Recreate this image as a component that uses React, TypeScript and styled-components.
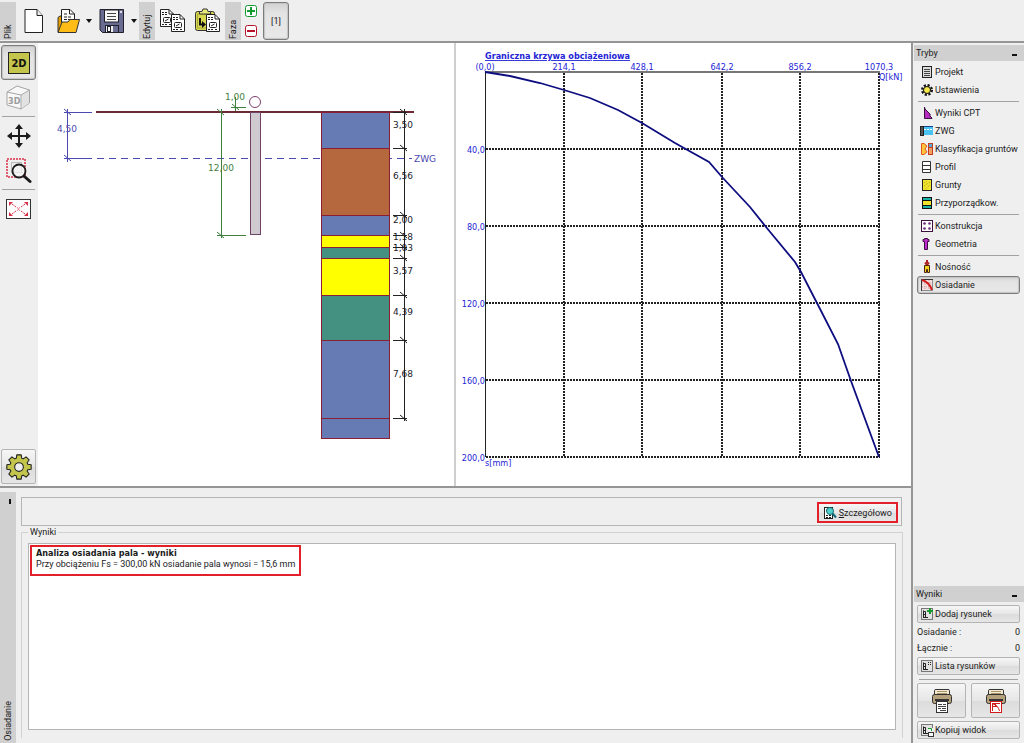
import React from "react";
import styled, { createGlobalStyle, css } from "styled-components";

const GlobalStyle = createGlobalStyle`
  *, *::before, *::after { box-sizing: border-box; }
  body {
    margin: 0;
    background: #efefef;
    color: #1b1b1b;
    font-family: Roboto, "Liberation Sans", sans-serif;
    font-size: 9px;
    line-height: 12px;
  }
  button { font: inherit; color: inherit; padding: 0; margin: 0; cursor: pointer; }
  svg { display: block; flex: none; }
`;

const Shell = styled.div`
  display: flex;
  flex-direction: column;
  min-height: 100vh;
`;

const TopBar = styled.header`
  display: flex;
  align-items: center;
  height: 43px;
  border-bottom: 2px solid #959595;
`;

const BarLabel = styled.span`
  width: 16px;
  height: 38px;
  padding: 1px 0;
  background: #d0d0d0;
  writing-mode: vertical-rl;
  transform: rotate(180deg);
  line-height: 16px;
`;

const ToolGroup = styled.div<{ $pad: string; $gap: number }>`
  display: flex;
  align-items: center;
  gap: ${(p) => p.$gap}px;
  padding: ${(p) => p.$pad};
`;

const IconButton = styled.button`
  display: flex;
  align-items: center;
  justify-content: center;
  border: 0;
  background: none;
`;

const PhaseButtons = styled.div`
  display: flex;
  flex-direction: column;
  gap: 8px;
  padding: 0 6px 0 4px;
`;

const raised = css`
  border: 1px solid #b4b4b4;
  border-radius: 2px;
  background: linear-gradient(#f6f6f6, #e6e6e6 50%, #dcdcdc 52%, #e6e6e6);
`;

const pressed = css`
  border: 1px solid #7c7c7c;
  border-radius: 3px;
  background: linear-gradient(#d3d3d3, #e4e4e4 30%, #e8e8e8);
  box-shadow: inset 0 0 1px 1px #c4c4c4;
`;

const PhaseTab = styled.button`
  ${pressed}
  width: 26px;
  height: 38px;
`;

const Body = styled.div`
  display: flex;
  flex: 1;
`;

const MainColumn = styled.main`
  display: flex;
  flex-direction: column;
  flex: 1;
  min-width: 0;
`;

const WorkArea = styled.div`
  display: flex;
  min-height: 445px;
  border-bottom: 2px solid #959595;
`;

const ViewBar = styled.nav`
  display: flex;
  flex-direction: column;
  align-items: center;
  width: 38px;
  padding: 2px 2px 2px 1px;
`;

const ViewButton = styled.button<{ $look?: "raised" | "pressed"; $h: number }>`
  display: flex;
  align-items: center;
  justify-content: center;
  width: 35px;
  height: ${(p) => p.$h}px;
  border: 0;
  background: none;
  ${(p) => p.$look === "raised" && raised}
  ${(p) => p.$look === "pressed" && pressed}
`;

const Rule = styled.hr<{ $m: string }>`
  align-self: stretch;
  height: 1px;
  margin: ${(p) => p.$m};
  border: 0;
  background: #a2a2a2;
`;

const Spacer = styled.div`
  flex: 1;
`;

const Pane = styled.section<{ $grow: number; $split?: boolean }>`
  flex: ${(p) => p.$grow} 1 0;
  min-width: 0;
  background: #fff;
  ${(p) => p.$split && css`border-left: 2px solid #cfcfcf;`}
  > svg { width: 100%; height: auto; }
`;

const BottomPanel = styled.section`
  display: flex;
  flex: 1;
  min-height: 220px;
  padding-top: 4px;
`;

const SideStrip = styled.div`
  display: flex;
  flex-direction: column;
  align-items: center;
  justify-content: space-between;
  width: 16px;
  padding: 7px 0 2px;
  background: #d0d0d0;
`;

const CollapseMark = styled.button<{ $vertical?: boolean }>`
  width: ${(p) => (p.$vertical ? 2 : 5)}px;
  height: ${(p) => (p.$vertical ? 5 : 2)}px;
  border: 0;
  background: #111;
  ${(p) => (p.$vertical ? css`margin-left: 4px;` : css`margin-bottom: 3px;`)}
`;

const StripText = styled.span`
  writing-mode: vertical-rl;
  transform: rotate(180deg);
  line-height: 16px;
`;

const BottomContent = styled.div`
  display: flex;
  flex-direction: column;
  flex: 1;
  min-width: 0;
  padding: 5px 8px 5px 5px;
`;

const ActionBar = styled.div`
  display: flex;
  align-items: center;
  justify-content: flex-end;
  height: 29px;
  margin-right: 1px;
  padding: 2px 3px 0;
  border: 1px solid #b5b5b5;
`;

const DetailsButton = styled.button`
  display: flex;
  align-items: center;
  gap: 2px;
  height: 21px;
  padding: 0 4px;
  border: 2px solid #e3202a;
  background: linear-gradient(#f6f6f6, #e6e6e6 50%, #dcdcdc 52%, #e6e6e6);
`;

const ResultsGroup = styled.fieldset`
  display: flex;
  flex-direction: column;
  flex: 1;
  min-width: 0;
  margin: 0;
  padding: 5px 6px 8px;
  border: 1px solid #d2d2d2;
  border-bottom: 0;
  > legend { padding: 0 2px; }
`;

const ResultsBox = styled.div`
  flex: 1;
  padding: 1px;
  border: 1px solid #b5b5b5;
  background: #fff;
`;

const ResultNote = styled.div`
  width: max-content;
  max-width: 100%;
  min-height: 31px;
  padding: 1px 4px;
  border: 2px solid #e3202a;
  line-height: 11px;
  > p { margin: 0; }
`;

const NoteTitle = styled.b`
  font-family: "DejaVu Sans Condensed", "DejaVu Sans", sans-serif;
  font-stretch: condensed;
`;

const Sidebar = styled.aside`
  display: flex;
  flex-direction: column;
  width: 113px;
  padding: 2px 0 4px 1px;
  border-left: 2px solid #959595;
`;

const SideHeader = styled.h2`
  display: flex;
  align-items: flex-end;
  justify-content: space-between;
  height: 16px;
  margin: 0;
  padding: 0 7px 2px 2px;
  background: #d0d0d0;
  font-size: 9px;
  font-weight: normal;
`;

const Modes = styled.nav`
  padding-top: 2px;
`;

const ModeList = styled.ul`
  margin: 0;
  padding: 0 4px 0 3px;
  list-style: none;
`;

const ModeButton = styled.button<{ $active?: boolean }>`
  display: flex;
  align-items: center;
  gap: 1px;
  width: 100%;
  height: 18px;
  padding-left: 2px;
  border: 1px solid transparent;
  background: none;
  white-space: nowrap;
  ${(p) => p.$active && pressed}
`;

const Outputs = styled.div`
  display: flex;
  flex-direction: column;
  padding: 3px 4px 0 3px;
`;

const OutputButton = styled.button`
  ${raised}
  display: flex;
  align-items: center;
  gap: 1px;
  height: 18px;
  padding-left: 2px;
  white-space: nowrap;
`;

const Counts = styled.div`
  padding: 1px 0;
`;

const CountRow = styled.div`
  display: flex;
  justify-content: space-between;
  height: 16px;
  padding-top: 2px;
`;

const PrintRow = styled.div`
  display: grid;
  grid-template-columns: 1fr 1fr;
  gap: 5px;
  margin-bottom: 3px;
`;

const PrintButton = styled.button`
  ${raised}
  display: flex;
  align-items: center;
  justify-content: center;
  height: 35px;
`;

const SvgText = styled.text<{ $size?: number; $bold?: boolean; $wide?: boolean }>`
  font-family: ${(p) => (p.$wide ? '"DejaVu Sans"' : '"DejaVu Sans Condensed"')}, sans-serif;
  font-stretch: ${(p) => (p.$wide ? "normal" : "condensed")};
  font-size: ${(p) => p.$size ?? 9}px;
  font-weight: ${(p) => (p.$bold ? "bold" : "normal")};
`;

/* ---------- toolbar icons ---------- */

const NewIcon = () => (
  <svg width="20" height="26" viewBox="0 0 20 26">
    <path d="M1 1.500H13L18.500 7.500V24.500H1Z" fill="#fff" stroke="#222" />
    <path d="M13 1.500V7.500H18.500" fill="#eee" stroke="#222" />
  </svg>
);

const OpenIcon = () => (
  <svg width="24" height="26" viewBox="0 0 24 26">
    <path d="M1 24V9.500L3 8H5V24Z" fill="#e8a000" stroke="#333" />
    <path d="M4.500 14V1.500H13L17.500 6V14" fill="#fff" stroke="#222" />
    <path d="M12.500 1.500V6H17.500" fill="none" stroke="#222" />
    <path d="M7 6h4M7 9h8M7 11.500h8" stroke="#222" strokeDasharray="3 1" />
    <path d="M1 24.500L5 14H11L13 11.500H22.500L19 24.500Z" fill="#ffbb16" stroke="#333" />
  </svg>
);

const Caret = () => (
  <svg width="7" height="4" viewBox="0 0 7 4"><path d="M0 0H6L3 4Z" fill="#111" /></svg>
);

const SaveIcon = () => (
  <svg width="26" height="26" viewBox="0 0 26 26">
    <path d="M1 1.500H24.500V24.500H3.500L1 22Z" fill="#696c90" stroke="#20202c" />
    <rect x="5.500" y="2" width="14" height="12" fill="#f8f8f8" stroke="#20202c" />
    <path d="M8 5.500h9M8 8.500h9M8 11.500h9" stroke="#444" />
    <rect x="6.500" y="17.500" width="13" height="7" fill="#eee" stroke="#20202c" />
    <rect x="8.500" y="18.500" width="3" height="5" fill="#fff" stroke="#20202c" />
    <rect x="14" y="18" width="5" height="6" fill="#696c90" />
    <rect x="21" y="3" width="2" height="2" fill="#ddd" />
  </svg>
);

const Page = ({ x, y }: { x: number; y: number }) => (
  <g transform={`translate(${x} ${y})`}>
    <path d="M.500 .500H9L13.500 5V17.500H.500Z" fill="#fff" stroke="#222" />
    <path d="M9 .500V5H13.500" fill="none" stroke="#222" />
    <path d="M2 3.500h2M5 3.500h2M2 5.500h2M5 5.500h2M2 15.500h2M5 15.500h2M9 15.500h2" stroke="#222" />
    <rect x="3.500" y="8.500" width="7" height="5" rx="1" fill="none" stroke="#222" />
    <path d="M5 12L8.500 10" stroke="#222" />
  </g>
);

const CopyIcon = () => (
  <svg width="27" height="26" viewBox="0 0 27 26"><Page x={0} y={1} /><Page x={11} y={6} /></svg>
);

const PasteIcon = () => (
  <svg width="27" height="26" viewBox="0 0 27 26">
    <rect x="1.500" y="3.500" width="19" height="19" rx="2" fill="#d7d84f" stroke="#333" />
    <rect x="3.500" y="6" width="14" height="14" fill="none" stroke="#aaa93a" />
    <path d="M5.500 6V3.500H8L9 1H13L14 3.500H16.500V6Z" fill="#e9e97c" stroke="#333" />
    <path d="M6 10V16.500H9" fill="none" stroke="#111" strokeWidth="2" />
    <path d="M8 13L12 16.500L8 20Z" fill="#111" />
    <Page x={12} y={6} />
  </svg>
);

const SignIcon = ({ plus }: { plus?: boolean }) => (
  <svg width="12" height="12" viewBox="0 0 12 12">
    <rect x=".500" y=".500" width="11" height="11" rx="2" fill="#fff" stroke={plus ? "#14992c" : "#b5122a"} />
    <path d={plus ? "M2 6H10M6 2V10" : "M2 6H10"} stroke={plus ? "#14992c" : "#b5122a"} strokeWidth="2" />
  </svg>
);

/* ---------- view bar icons ---------- */

const View2D = () => (
  <svg width="22" height="22" viewBox="0 0 22 22">
    <rect x=".500" y=".500" width="21" height="21" fill="#c3c54c" stroke="#222" />
    <SvgText x="11" y="15" textAnchor="middle" $size={11} $bold fill="#111">2D</SvgText>
  </svg>
);

const View3D = () => (
  <svg width="25" height="26" viewBox="0 0 25 26">
    <path d="M1 7L11 1L23.500 5V18L15 24L1 20Z" fill="#f8f8f8" stroke="#a5a5a5" />
    <path d="M15.500 10.500L23 5.500V18L15.500 23.500Z" fill="#e2e2e2" />
    <path d="M1 7L15 10L23.500 5M15 10V24" fill="none" stroke="#a5a5a5" />
    <SvgText x="2" y="19" $size={9} $bold fill="#9c9c9c">3D</SvgText>
  </svg>
);

const MoveIcon = () => (
  <svg width="24" height="24" viewBox="0 0 24 24">
    <path d="M12 3V21M3 12H21" stroke="#1b1b1b" strokeWidth="2" />
    <path d="M12 0L16 5H8ZM12 24L16 19H8ZM0 12L5 8V16ZM24 12L19 8V16Z" fill="#1b1b1b" />
  </svg>
);

const ZoomIcon = () => (
  <svg width="26" height="26" viewBox="0 0 26 26">
    <rect x="1" y="1" width="18" height="18" fill="none" stroke="#d83048" strokeWidth="1.500" strokeDasharray="2 1" />
    <rect x="5.500" y="4.500" width="10" height="10" fill="#eee" stroke="#bbb" />
    <circle cx="13" cy="13" r="6.500" fill="#f4f4f4" fillOpacity=".7" stroke="#1b1b1b" strokeWidth="1.800" />
    <path d="M18.500 18.500L24 23.500" stroke="#1b1b1b" strokeWidth="3" strokeLinecap="round" />
  </svg>
);

const FitIcon = () => (
  <svg width="25" height="20" viewBox="0 0 25 20">
    <rect x=".500" y=".500" width="24" height="19" fill="#fff" stroke="#333" />
    <path d="M6 5L10 8M19 5L15 8M6 15L10 12M19 15L15 12" stroke="#d83048" strokeDasharray="2 1" />
    <path d="M3 3H7L3 7ZM22 3H18L22 7ZM3 17H7L3 13ZM22 17H18L22 13Z" fill="#d83048" />
    <path d="M11 8L14 12M14 8L11 12" stroke="#e88a96" />
  </svg>
);

const Gear = ({ size, fill, hole }: { size: number; fill: string; hole: string }) => {
  const pts: string[] = [];
  for (let i = 0; i < 8; i++) {
    const a = (i * Math.PI) / 4;
    [[-0.3, 8.5], [-0.18, 11.4], [0.18, 11.4], [0.3, 8.5]].forEach(([d, r]) =>
      pts.push(`${(12 + r * Math.sin(a + d)).toFixed(2)},${(12 - r * Math.cos(a + d)).toFixed(2)}`)
    );
  }
  return (
    <svg width={size} height={size} viewBox="0 0 24 24">
      <polygon points={pts.join(" ")} fill={fill} stroke="#222" strokeLinejoin="round" />
      <circle cx="12" cy="12" r="4" fill={hole} stroke="#222" />
    </svg>
  );
};

/* ---------- sidebar icons, all on a 14 x 14 grid ---------- */

const Small = ({ children }: { children: React.ReactNode }) => (
  <svg width="14" height="14" viewBox="0 0 14 14">{children}</svg>
);

const ProjectIcon = () => (
  <Small>
    <rect x="2.500" y="1.500" width="9" height="11" fill="#ddd" stroke="#222" />
    <path d="M4 4.500h6M4 6.500h6M4 8.500h6M4 10.500h6" stroke="#444" />
  </Small>
);
const SettingsIcon = () => (
  <Small>
    <circle cx="7" cy="7" r="4.500" fill="none" stroke="#111" strokeWidth="3" strokeDasharray="2 1.530" />
    <circle cx="7" cy="7" r="3.500" fill="#f6e84a" stroke="#111" />
  </Small>
);
const CptIcon = () => (
  <Small>
    <path d="M4.500 1L5 3L7 5L8 6L10 8V10L12 12V12.500H4.500Z" fill="#b52bbf" stroke="#3b1140" />
  </Small>
);
const WaterIcon = () => (
  <Small>
    <rect x=".500" y="2.500" width="3" height="9" fill="#555" stroke="#222" />
    <rect x="4" y="3" width="9" height="8" fill="#49c3f2" />
    <path d="M4 2.500H13" stroke="#1c3f8c" />
    <path d="M4 5.500H13" stroke="#fff" strokeDasharray="2 1" />
  </Small>
);
const ClassIcon = () => (
  <Small>
    <path d="M1.500 1.500H4L7 4L5 7L7 10L4 12.500H1.500Z" fill="#ffc43b" stroke="#e2561f" />
    <rect x="8.500" y="1.500" width="4" height="4" fill="#58a8d8" stroke="#c43b1f" />
    <rect x="8.500" y="5.500" width="4" height="7" fill="#f0a060" stroke="#c43b1f" />
  </Small>
);
const ProfileIcon = () => (
  <Small><path d="M2.500 1.500H10.500V12.500H2.500ZM2.500 5.500H10.500M2.500 9.500H10.500" fill="#fff" stroke="#333" /></Small>
);
const SoilIcon = () => (
  <Small>
    <rect x="2.500" y="1.500" width="9" height="11" fill="#f2e52e" stroke="#222" />
    <path d="M4 5L7 3M4 8L10 4M5 11L10 7" stroke="#a49a20" strokeDasharray="1 1" />
  </Small>
);
const AssignIcon = () => (
  <Small>
    <rect x="2.500" y="1.500" width="9" height="11" fill="#f2e52e" stroke="#111" />
    <rect x="3" y="2" width="8" height="2" fill="#19b3a6" />
    <rect x="3" y="10" width="8" height="2" fill="#19b3a6" />
    <path d="M2 4.500H12M2 9.500H12" stroke="#111" />
  </Small>
);
const ConstructIcon = () => (
  <Small>
    <rect x="1.500" y="1.500" width="11" height="11" fill="#fff" stroke="#3b1140" />
    <g fill="#6a2a78"><circle cx="4.500" cy="4.500" r="1.300" /><circle cx="9.500" cy="4.500" r="1.300" /><circle cx="4.500" cy="9.500" r="1.300" /><circle cx="9.500" cy="9.500" r="1.300" /></g>
  </Small>
);
const GeometryIcon = () => (
  <Small><path d="M3 2.500H4.500V1.500H7.500V2.500H9V4.500H7.500V12.500H4.500V4.500H3Z" fill="#c22bcf" stroke="#3b1140" /></Small>
);
const CapacityIcon = () => (
  <Small>
    <path d="M7 0V3M5 2.500L7 5L9 2.500" stroke="#b01c1c" strokeWidth="2" fill="none" />
    <path d="M4.500 5.500H9.500V12.500H7.500V9.500H6.500V12.500H4.500Z" fill="#f2d21c" stroke="#4a2410" />
  </Small>
);
const SettlementIcon = () => (
  <Small>
    <rect x="1.500" y="1.500" width="11" height="11" fill="#f6dede" stroke="#8d8d8d" />
    <path d="M5 2V12M9 2V12M2 5H12M2 9H12" stroke="#c3a3a3" strokeDasharray="1 1" />
    <path d="M1.500 13V1.500H13" fill="none" stroke="#333" />
    <path d="M2 2Q9 4 12 12" fill="none" stroke="#d11c1c" strokeWidth="2" />
  </Small>
);

const PictureIcon = ({ kind }: { kind: "add" | "list" | "copy" }) => (
  <Small>
    <rect x="1.500" y="1.500" width="11" height="11" fill="#e2e2e2" stroke="#777" />
    <path d="M3.500 3.500V10.500M3.500 4.500H5.500V10.500M3.500 7.500H6M3 10.500H8" fill="none" stroke="#222" />
    {kind === "add" && <path d="M7 4H13M10 1V7" stroke="#14992c" strokeWidth="2" />}
    {kind === "list" && <path d="M8 3.500h1M10 3.500h1M8 5.500h1M10 5.500h1" stroke="#222" />}
    {kind === "copy" && (
      <>
        <rect x="8" y="5" width="6" height="9" fill="#efefef" />
        <path d="M8 5.500H11.500V8" fill="none" stroke="#14992c" />
        <rect x="8.500" y="9.500" width="5" height="4" fill="#fff" stroke="#333" />
      </>
    )}
  </Small>
);

const PrinterIcon = ({ red }: { red?: boolean }) => (
  <svg width="22" height="26" viewBox="0 0 22 26">
    <path d="M3.500 7V2.500Q3.500 1.500 5 1.500H17Q18.500 1.500 18.500 2.500V7" fill="#f4ead2" stroke="#333" />
    <path d="M6 3.500H16M6 5.500H16" stroke="#a79468" />
    <rect x="1.500" y="6.500" width="19" height="9" rx="2" fill="#b5a27c" stroke="#333" />
    <path d="M4 12H18" stroke="#333" strokeWidth="2" />
    <rect x="5.500" y="13.500" width="11" height="11" fill="#fff" stroke={red ? "#d11c1c" : "#333"} />
    {red ? (
      <path d="M7.500 15V23M7 15.500H15M8 16Q13 17 14.500 23M10.500 16V19M8 18.500H12" fill="none" stroke="#d11c1c" />
    ) : (
      <path d="M7 16.500H11M12 16.500H15M7 18.500H15M7 20.500H10M11 20.500H15M9 22.500H15" stroke="#444" />
    )}
  </svg>
);

const DetailsIcon = () => (
  <svg width="14" height="14" viewBox="0 0 14 14">
    <rect x="1.500" y="1.500" width="8" height="11" fill="#fff" stroke="#222" />
    <path d="M3 9.500h2M6 9.500h2M3 11.500h2M6 11.500h2M3 4h2" stroke="#222" />
    <circle cx="7" cy="5" r="3.500" fill="#4fd0cc" stroke="#156b70" />
    <path d="M9.500 7.500L13 11.500" stroke="#0f6b78" strokeWidth="2" />
  </svg>
);

/* ---------- pile and soil profile ---------- */

const layers = [
  { top: 112, bottom: 148, fill: "#667ab3", label: "3,50", base: 128 },
  { top: 148, bottom: 215, fill: "#b5673d", label: "6,56", base: 179 },
  { top: 215, bottom: 235, fill: "#667ab3", label: "2,00", base: 223 },
  { top: 235, bottom: 247, fill: "#ffff00", label: "1,18", base: 240 },
  { top: 247, bottom: 258, fill: "#459181", label: "1,03", base: 251 },
  { top: 258, bottom: 295, fill: "#ffff00", label: "3,57", base: 274 },
  { top: 295, bottom: 340, fill: "#459181", label: "4,39", base: 315 },
  { top: 340, bottom: 418, fill: "#667ab3", label: "7,68", base: 377 },
];

const Tick = ({ x, y }: { x: number; y: number }) => <path d={`M${x - 4} ${y - 3}L${x + 3} ${y + 3}`} />;

const ProfileDrawing = () => (
  <svg viewBox="38 43 416 443" role="img" aria-label="Profil">
    <path d="M96 112H414" stroke="#6b2a33" strokeWidth="2" />
    <path d="M97 158.500H412" stroke="#4a4ab0" strokeDasharray="7 5" />
    <g stroke="#4a4ab0" fill="none">
      <path d="M67.500 109V162M64 112.500H92M64 158.500H92" />
      <Tick x={68} y={112} /><Tick x={68} y={158} />
    </g>
    <SvgText $wide x="67" y="132" textAnchor="middle" fill="#4a4ab0">4,50</SvgText>
    <SvgText $wide x="414" y="162" fill="#4a4ab0">ZWG</SvgText>
    <g stroke="#3f7f3f" fill="none">
      <path d="M221.500 109V238M217 235.500H246M235.500 97V111M231 107.500H246" />
      <Tick x={221} y={112} /><Tick x={221} y={235} /><Tick x={236} y={107} />
    </g>
    <SvgText $wide x="221" y="171" textAnchor="middle" fill="#3f7f3f">12,00</SvgText>
    <SvgText $wide x="235" y="100" textAnchor="middle" fill="#3f7f3f">1,00</SvgText>
    <circle cx="255" cy="102" r="5.500" fill="#fff" stroke="#7d3f6b" />
    <rect x="250.500" y="112.500" width="10" height="122" fill="#cfcacf" stroke="#6e4366" />
    {layers.map((l) => (
      <rect key={l.label} x="321.500" y={l.top + 0.5} width="68" height={l.bottom - l.top} fill={l.fill} stroke="#8a1f33" />
    ))}
    <rect x="321.500" y="418.500" width="68" height="20" fill="#667ab3" stroke="#8a1f33" />
    <g stroke="#222" fill="none">
      <path d="M404.500 109V421" />
      {[...layers.map((l) => l.top), 418].map((y) => (
        <g key={y}><path d={`M393 ${y + 0.5}H407`} /><Tick x={404} y={y} /></g>
      ))}
    </g>
    {layers.map((l) => (
      <SvgText $wide key={l.label} x="403" y={l.base} textAnchor="middle" fill="#1b1b2b">{l.label}</SvgText>
    ))}
  </svg>
);

/* ---------- load curve ---------- */

const xTicks = [[564, "214,1"], [642, "428,1"], [722, "642,2"], [800, "856,2"], [879, "1070,3"]] as const;
const yTicks = [[149, "40,0"], [226, "80,0"], [303, "120,0"], [380, "160,0"], [457, "200,0"]] as const;

const CurveDrawing = () => (
  <svg viewBox="456 43 455 443" role="img" aria-label="Graniczna krzywa">
    <g stroke="#222" strokeWidth="2" strokeDasharray="2 1" shapeRendering="crispEdges">
      {xTicks.map(([x]) => <path key={x} d={`M${x} 73V457`} />)}
      {yTicks.map(([y]) => <path key={y} d={`M486 ${y}H880`} />)}
    </g>
    <path d="M485.500 457V72" stroke="#222" fill="none" />
    <path d="M485 72H880" stroke="#777" strokeWidth="2" fill="none" />
    <polyline
      points="485,72 510,76 540,83 564,90 590,98 618,110 642,123 675,143 709,162 722,177 750,207 766,227 795,262 801,272 818,305 838,344 851,381 879,457"
      fill="none" stroke="#0d0d80" strokeWidth="1.800"
    />
    <g fill="#2424d6">
      <SvgText $bold x="485" y="59" textDecoration="underline">Graniczna krzywa obciążeniowa</SvgText>
      <SvgText x="485" y="70" textAnchor="middle">(0,0)</SvgText>
      {xTicks.map(([x, t]) => <SvgText key={t} x={x} y="70" textAnchor="middle">{t}</SvgText>)}
      {yTicks.map(([y, t]) => <SvgText key={t} x="485" y={y + 4} textAnchor="end">{t}</SvgText>)}
      <SvgText x="879" y="80">Q[kN]</SvgText>
      <SvgText x="485" y="466">s[mm]</SvgText>
    </g>
  </svg>
);

/* ---------- page ---------- */

const modeGroups: { label: string; icon: React.FC; active?: boolean }[][] = [
  [
    { label: "Projekt", icon: ProjectIcon },
    { label: "Ustawienia", icon: SettingsIcon },
  ],
  [
    { label: "Wyniki CPT", icon: CptIcon },
    { label: "ZWG", icon: WaterIcon },
    { label: "Klasyfikacja gruntów", icon: ClassIcon },
    { label: "Profil", icon: ProfileIcon },
    { label: "Grunty", icon: SoilIcon },
    { label: "Przyporządkow.", icon: AssignIcon },
  ],
  [
    { label: "Konstrukcja", icon: ConstructIcon },
    { label: "Geometria", icon: GeometryIcon },
  ],
  [
    { label: "Nośność", icon: CapacityIcon },
    { label: "Osiadanie", icon: SettlementIcon, active: true },
  ],
];

export default function App() {
  return (
    <Shell>
      <GlobalStyle />
      <TopBar>
        <BarLabel>Plik</BarLabel>
        <ToolGroup $pad="0 5px 0 8px" $gap={13}>
          <IconButton aria-label="Nowy"><NewIcon /></IconButton>
          <IconButton aria-label="Otwórz"><OpenIcon /></IconButton>
        </ToolGroup>
        <ToolGroup $pad="0 1px 0 0" $gap={6}>
          <IconButton aria-label="Ostatnie pliki"><Caret /></IconButton>
          <IconButton aria-label="Zapisz"><SaveIcon /></IconButton>
          <IconButton aria-label="Zapisz jako"><Caret /></IconButton>
        </ToolGroup>
        <BarLabel>Edytuj</BarLabel>
        <ToolGroup $pad="0 4px 0 5px" $gap={7}>
          <IconButton aria-label="Kopiuj"><CopyIcon /></IconButton>
          <IconButton aria-label="Wklej"><PasteIcon /></IconButton>
        </ToolGroup>
        <BarLabel>Faza</BarLabel>
        <PhaseButtons>
          <IconButton aria-label="Dodaj fazę"><SignIcon plus /></IconButton>
          <IconButton aria-label="Usuń fazę"><SignIcon /></IconButton>
        </PhaseButtons>
        <PhaseTab>[1]</PhaseTab>
      </TopBar>

      <Body>
        <MainColumn>
          <WorkArea>
            <ViewBar>
              <ViewButton $look="pressed" $h={35} aria-label="2D"><View2D /></ViewButton>
              <ViewButton $h={35} aria-label="3D"><View3D /></ViewButton>
              <Rule $m="1px 1px" />
              <ViewButton $h={36} aria-label="Przesuń"><MoveIcon /></ViewButton>
              <ViewButton $h={34} aria-label="Powiększ"><ZoomIcon /></ViewButton>
              <Rule $m="1px 1px" />
              <ViewButton $h={36} aria-label="Dopasuj"><FitIcon /></ViewButton>
              <Spacer />
              <ViewButton $look="raised" $h={35} aria-label="Ustawienia rysunku"><Gear size={26} fill="#c3c54c" hole="#eee" /></ViewButton>
            </ViewBar>
            <Pane $grow={416}><ProfileDrawing /></Pane>
            <Pane $grow={455} $split><CurveDrawing /></Pane>
          </WorkArea>

          <BottomPanel>
            <SideStrip>
              <CollapseMark $vertical aria-label="Zwiń panel" />
              <StripText>Osiadanie</StripText>
            </SideStrip>
            <BottomContent>
              <ActionBar>
                <DetailsButton><DetailsIcon /><span><u>S</u>zczegółowo</span></DetailsButton>
              </ActionBar>
              <ResultsGroup>
                <legend>Wyniki</legend>
                <ResultsBox>
                  <ResultNote>
                    <p><NoteTitle>Analiza osiadania pala - wyniki</NoteTitle></p>
                    <p>Przy obciążeniu Fs = 300,00 kN osiadanie pala wynosi = 15,6 mm</p>
                  </ResultNote>
                </ResultsBox>
              </ResultsGroup>
            </BottomContent>
          </BottomPanel>
        </MainColumn>

        <Sidebar>
          <SideHeader>Tryby<CollapseMark aria-label="Zwiń tryby" /></SideHeader>
          <Modes>
            {modeGroups.map((group, i) => (
              <React.Fragment key={group[0].label}>
                {i > 0 && <Rule $m="2px 5px 2px 4px" />}
                <ModeList>
                  {group.map(({ label, icon: Icon, active }) => (
                    <li key={label}>
                      <ModeButton $active={active}><Icon />{label}</ModeButton>
                    </li>
                  ))}
                </ModeList>
              </React.Fragment>
            ))}
          </Modes>
          <Spacer />
          <SideHeader>Wyniki<CollapseMark aria-label="Zwiń wyniki" /></SideHeader>
          <Outputs>
            <OutputButton><PictureIcon kind="add" />Dodaj rysunek</OutputButton>
            <Counts>
              <CountRow><span>Osiadanie :</span><span>0</span></CountRow>
              <CountRow><span>Łącznie :</span><span>0</span></CountRow>
            </Counts>
            <OutputButton><PictureIcon kind="list" />Lista rysunków</OutputButton>
            <Rule $m="4px 2px 3px" />
            <PrintRow>
              <PrintButton aria-label="Drukuj raport"><PrinterIcon /></PrintButton>
              <PrintButton aria-label="Drukuj rysunek"><PrinterIcon red /></PrintButton>
            </PrintRow>
            <OutputButton><PictureIcon kind="copy" />Kopiuj widok</OutputButton>
          </Outputs>
        </Sidebar>
      </Body>
    </Shell>
  );
}
